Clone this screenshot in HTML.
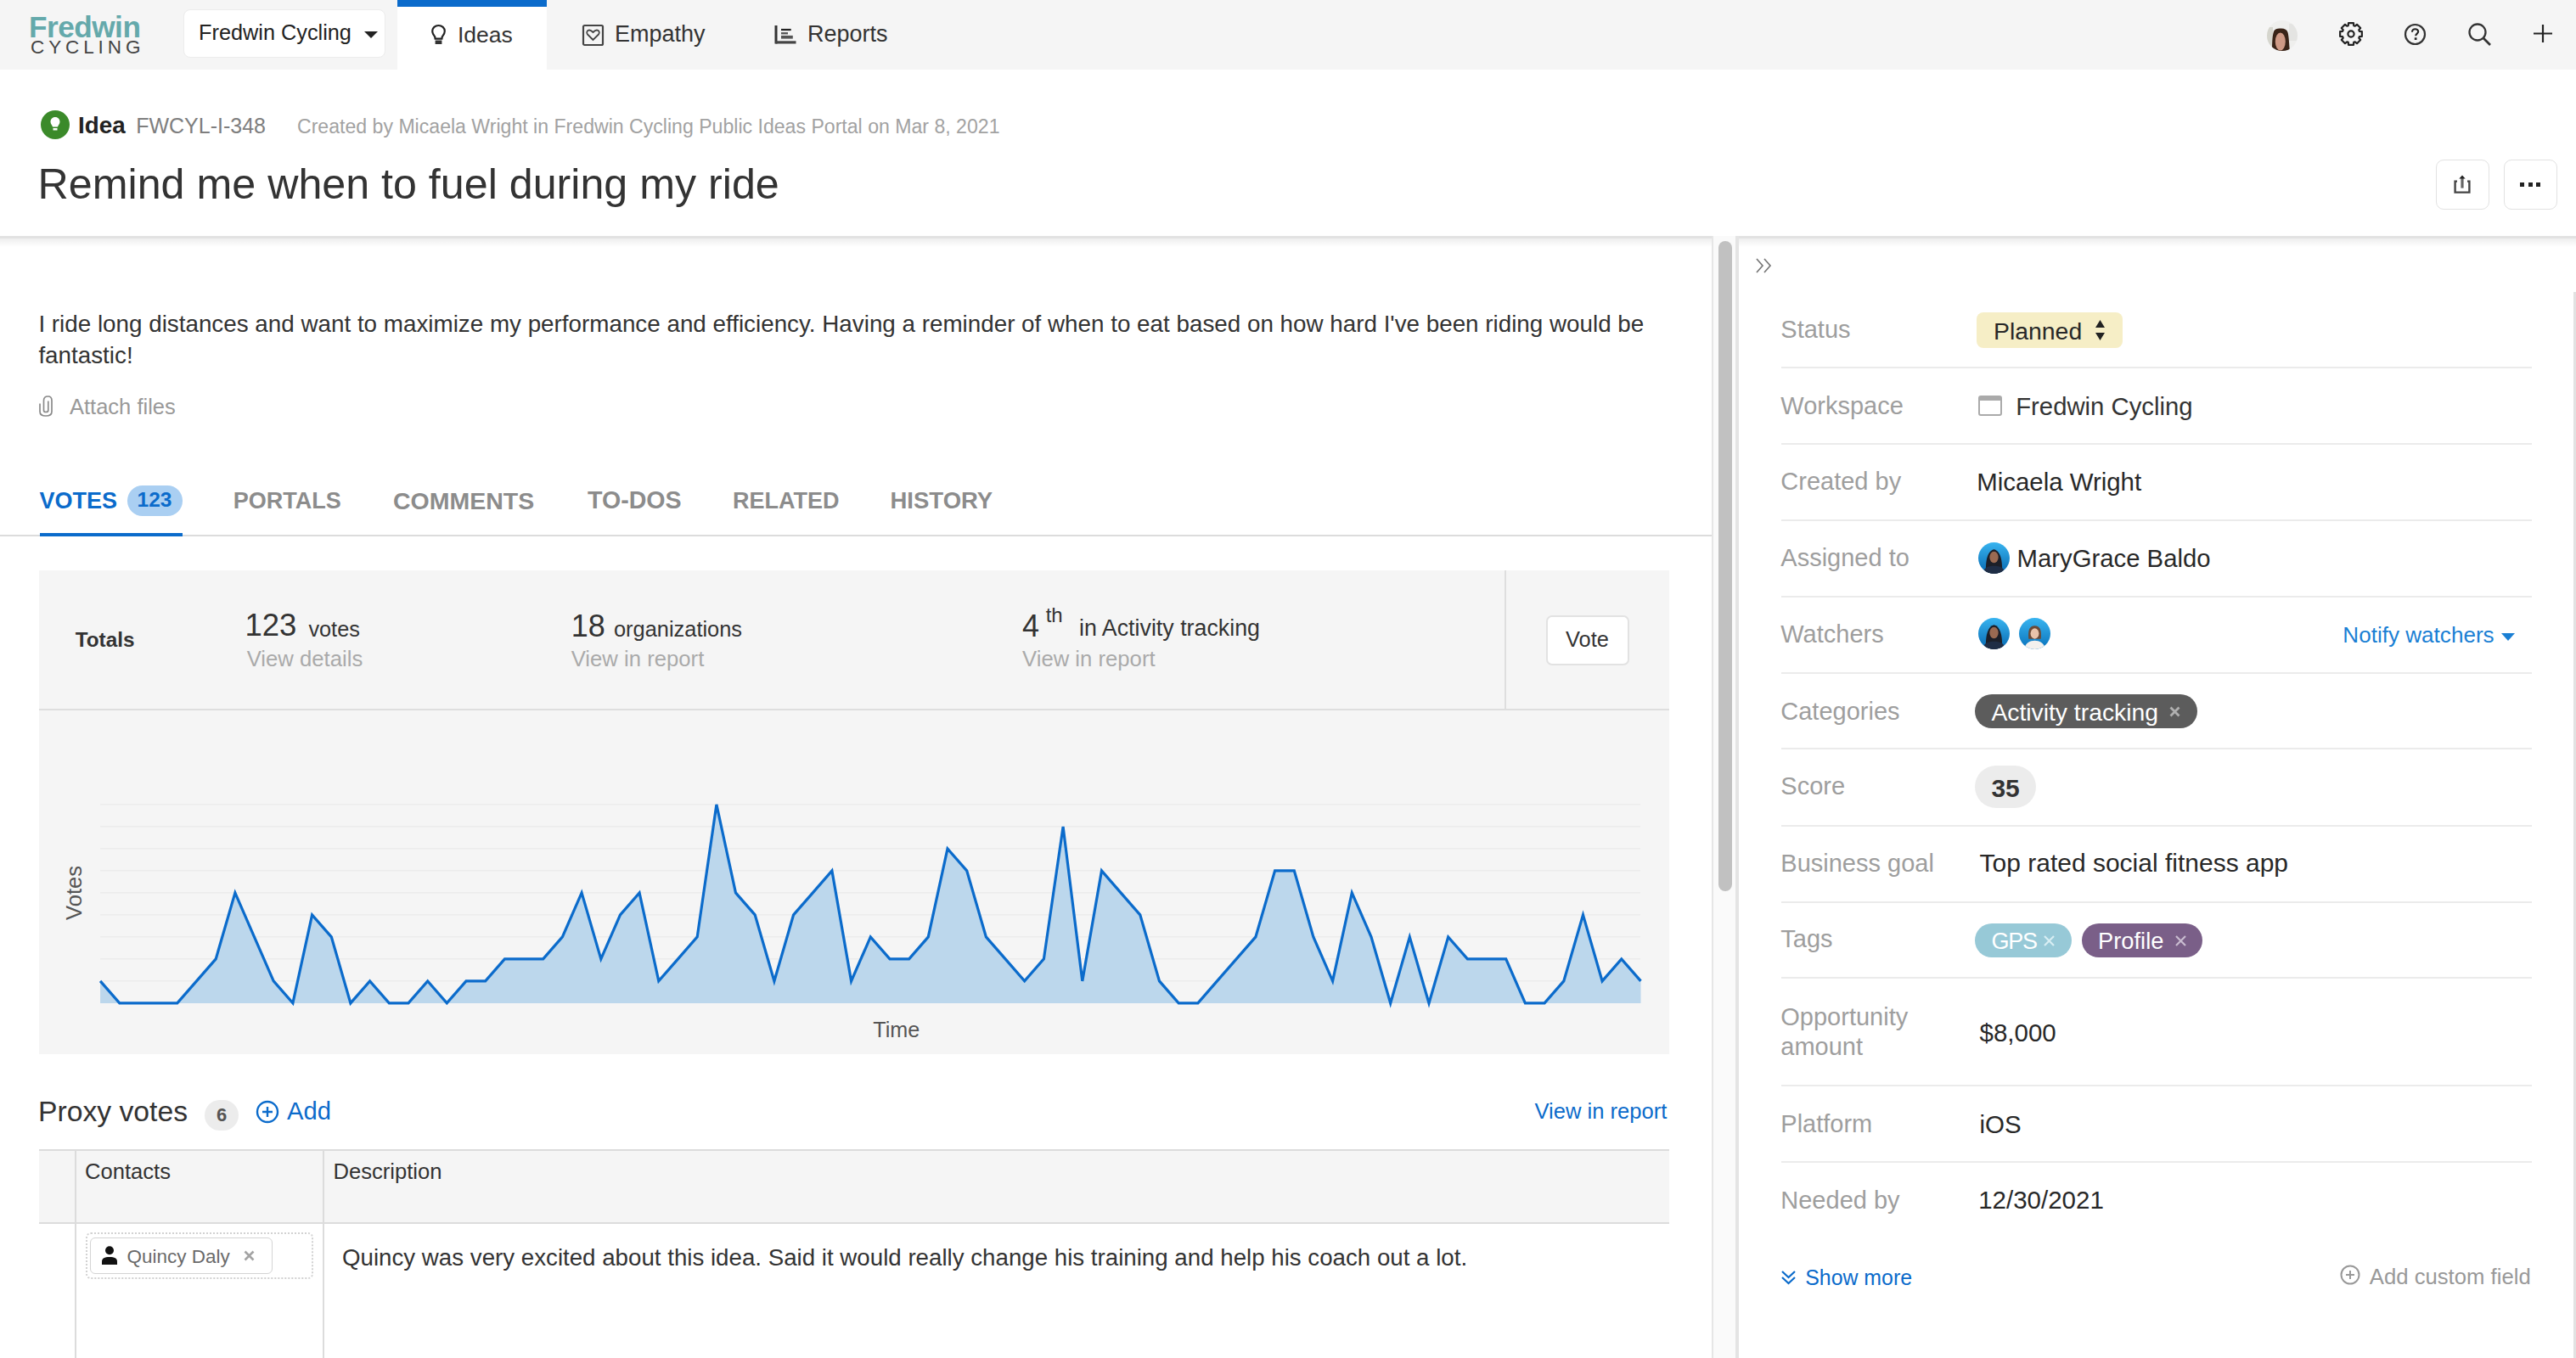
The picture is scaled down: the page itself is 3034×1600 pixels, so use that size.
<!DOCTYPE html>
<html><head><meta charset="utf-8"><title>Remind me when to fuel during my ride</title>
<style>
html,body{margin:0;padding:0;width:3034px;height:1600px;overflow:hidden;background:#fff;}
body{position:relative;font-family:"Liberation Sans",sans-serif;}
.a{position:absolute;}
.t{position:absolute;white-space:nowrap;line-height:1;}
</style></head><body>
<div class="a" style="left:0.0px;top:0.0px;width:3034.0px;height:82.0px;background:#f5f5f5"></div>
<div class="t" style="left:34.0px;top:14.0px;font-size:35.2px;color:#64a9ab;font-weight:700;letter-spacing:-0.5px">Fredwin</div>
<div class="t" style="left:36.0px;top:45.0px;font-size:22.5px;color:#444;font-weight:400;letter-spacing:4.9px">CYCLING</div>
<div class="a" style="left:216.0px;top:11.0px;width:238.0px;height:57.0px;background:#fff;border-radius:8px;border:1.5px solid #ececec;box-sizing:border-box"></div>
<div class="t" style="left:234.0px;top:26.3px;font-size:25.3px;color:#222;font-weight:400;">Fredwin Cycling</div>
<svg class="a" style="left:428px;top:36px" width="18" height="10"><path d="M1 1 L17 1 L9 9 Z" fill="#222"/></svg>
<div class="a" style="left:468.0px;top:0.0px;width:176.0px;height:82.0px;background:#fff"></div>
<div class="a" style="left:468.0px;top:0.0px;width:176.0px;height:8.0px;background:#0b6bcb"></div>
<div class="t" style="left:539.0px;top:27.6px;font-size:26.5px;color:#333;font-weight:400;">Ideas</div>
<div class="t" style="left:724.0px;top:27.1px;font-size:27px;color:#333;font-weight:400;">Empathy</div>
<div class="t" style="left:951.0px;top:27.1px;font-size:27px;color:#333;font-weight:400;">Reports</div>
<svg class="a" style="left:507px;top:28px" width="19" height="26" viewBox="0 0 19 26"><path d="M9.5 2 C5.5 2 2.2 4.8 2.2 8.8 C2.2 11.8 4.2 13.6 5.2 15.2 L5.6 17.6 H13.4 L13.8 15.2 C14.8 13.6 16.8 11.8 16.8 8.8 C16.8 4.8 13.5 2 9.5 2 Z" fill="none" stroke="#222" stroke-width="2.2"/><rect x="5.6" y="19.5" width="7.8" height="4.5" fill="#333"/></svg>
<svg class="a" style="left:685px;top:28px" width="27" height="27" viewBox="0 0 27 27"><rect x="2" y="2" width="23" height="23" rx="1.5" fill="none" stroke="#444" stroke-width="2.2"/><path d="M13.5 19 L7 12.5 C5.5 11 6 7.5 9 7.5 C11 7.5 12.5 9 13.5 10 C14.5 9 16 7.5 18 7.5 C21 7.5 21.5 11 20 12.5 Z" fill="none" stroke="#444" stroke-width="1.8"/></svg>
<svg class="a" style="left:911px;top:29px" width="28" height="24" viewBox="0 0 28 24"><rect x="1.5" y="1" width="3" height="21.5" fill="#333"/><rect x="2.5" y="19.3" width="24" height="3.2" fill="#444"/><rect x="9" y="4.9" width="11.7" height="2.2" fill="#222"/><rect x="9" y="9.1" width="8" height="2.3" fill="#555"/><rect x="9" y="12.9" width="13.8" height="3.7" fill="#555"/></svg>
<svg class="a" style="left:2670px;top:23.5px" width="36" height="36" viewBox="0 0 36 36"><defs><clipPath id="cav"><circle cx="18" cy="18" r="18"/></clipPath></defs><g clip-path="url(#cav)"><rect width="36" height="36" fill="#efefed"/><rect x="0" y="8" width="7" height="28" fill="#d6d6ce"/><rect x="26" y="4" width="10" height="20" fill="#e4e4e2"/><path d="M6 36 C6 26 6.5 14 9 11.5 C11 9.5 14 9.5 17 9.5 C21 9.5 23.5 11 24.5 14 C26 19 26 28 27 36 Z" fill="#3a2418"/><ellipse cx="15.8" cy="25" rx="6" ry="10.5" fill="#cf9a86"/></g></svg>
<svg class="a" style="left:2754px;top:25px" width="30" height="30" viewBox="0 0 30 30"><path d="M18.21 24.89 L17.97 27.86 L12.03 27.86 L11.79 24.89 L10.28 24.27 L8.01 26.19 L3.81 21.99 L5.73 19.72 L5.11 18.21 L2.14 17.97 L2.14 12.03 L5.11 11.79 L5.73 10.28 L3.81 8.01 L8.01 3.81 L10.28 5.73 L11.79 5.11 L12.03 2.14 L17.97 2.14 L18.21 5.11 L19.72 5.73 L21.99 3.81 L26.19 8.01 L24.27 10.28 L24.89 11.79 L27.86 12.03 L27.86 17.97 L24.89 18.21 L24.27 19.72 L26.19 21.99 L21.99 26.19 L19.72 24.27 Z" fill="none" stroke="#222" stroke-width="2.2" stroke-linejoin="round"/><circle cx="15" cy="15" r="3.6" fill="none" stroke="#222" stroke-width="2.2"/></svg>
<svg class="a" style="left:2831px;top:27px" width="27" height="27" viewBox="0 0 27 27"><circle cx="13.5" cy="13.5" r="11.5" fill="none" stroke="#333" stroke-width="2.2"/><path d="M10 10.8 C10 8.3 11.7 7.3 13.6 7.3 C15.5 7.3 17.2 8.5 17.2 10.3 C17.2 12.4 14.2 12.9 14.2 15.2" fill="none" stroke="#222" stroke-width="2.1"/><rect x="12.8" y="17.3" width="2.7" height="2.7" fill="#222"/></svg>
<svg class="a" style="left:2906px;top:26px" width="30" height="30" viewBox="0 0 30 30"><circle cx="12" cy="12" r="9.5" fill="none" stroke="#333" stroke-width="2.3"/><path d="M19 19 L27 27" stroke="#333" stroke-width="2.6"/></svg>
<svg class="a" style="left:2983px;top:28px" width="24" height="23" viewBox="0 0 24 23"><path d="M12 1 V22 M1 11.5 H23" stroke="#222" stroke-width="2.2"/></svg>
<div class="a" style="left:48px;top:130px;width:34px;height:34px;border-radius:50%;background:#3b8a2a"></div>
<svg class="a" style="left:55px;top:136px" width="20" height="22" viewBox="0 0 20 22"><path d="M10 2 C6.5 2 4.5 4.5 4.5 7.5 C4.5 10 6.5 11.5 7 13.5 L13 13.5 C13.5 11.5 15.5 10 15.5 7.5 C15.5 4.5 13.5 2 10 2 Z" fill="#fff"/><rect x="7.5" y="15" width="5" height="2.5" fill="#fff"/></svg>
<div class="t" style="left:92.0px;top:134.1px;font-size:27.8px;color:#222;font-weight:700;">Idea</div>
<div class="t" style="left:160.2px;top:136.4px;font-size:25px;color:#7e7e7e;font-weight:400;">FWCYL-I-348</div>
<div class="t" style="left:350.0px;top:138.0px;font-size:23.1px;color:#a2a2a2;font-weight:400;">Created by Micaela Wright in Fredwin Cycling Public Ideas Portal on Mar 8, 2021</div>
<div class="t" style="left:44.6px;top:191.5px;font-size:50.2px;color:#333;font-weight:400;">Remind me when to fuel during my ride</div>
<div class="a" style="left:2869.0px;top:188.0px;width:63.0px;height:59.0px;border:1.6px solid #e2e2e2;border-radius:9px;box-sizing:border-box;background:#fff"></div>
<div class="a" style="left:2949.0px;top:188.0px;width:63.0px;height:59.0px;border:1.6px solid #e2e2e2;border-radius:9px;box-sizing:border-box;background:#fff"></div>
<svg class="a" style="left:2889px;top:205px" width="22" height="25" viewBox="0 0 22 25"><path d="M5 8.6 H2.6 V21.6 H19.4 V8.6 H17" fill="none" stroke="#444" stroke-width="2.4"/><path d="M11 4 V16.6" stroke="#666" stroke-width="3.2"/><path d="M7.3 5.6 L11 1.4 L14.7 5.6 Z" fill="#222"/></svg>
<svg class="a" style="left:2966px;top:212px" width="30" height="10" viewBox="0 0 30 10"><rect x="2" y="3" width="5" height="5" fill="#222"/><rect x="12" y="3" width="5" height="5" fill="#222"/><rect x="21" y="3" width="5" height="5" fill="#222"/></svg>
<div class="a" style="left:0.0px;top:278.0px;width:3034.0px;height:3.0px;background:#e2e2e2"></div>
<div class="a" style="left:0.0px;top:281.0px;width:3034.0px;height:10.0px;background:linear-gradient(#eeeeee,#ffffff)"></div>
<div class="t" style="left:45.4px;top:367.5px;font-size:27.8px;color:#333;font-weight:400;">I ride long distances and want to maximize my performance and efficiency. Having a reminder of when to eat based on how hard I've been riding would be</div>
<div class="t" style="left:45.4px;top:404.5px;font-size:27.8px;color:#333;font-weight:400;">fantastic!</div>
<svg class="a" style="left:45px;top:465px" width="18" height="27" viewBox="0 0 18 27"><path d="M2 10.5 V20 C2 23.5 4.5 25 9 25 C13.5 25 16 23.5 16 20 V7 C16 3.5 14.5 2 11.5 2 C8.5 2 6.5 3.5 6.5 7 V18.5 C6.5 20 7.5 20.5 9 20.5 C10.5 20.5 11.8 20 11.8 18.5 V7.5" fill="none" stroke="#8a8a8a" stroke-width="1.7"/></svg>
<div class="t" style="left:82.0px;top:466.8px;font-size:25.5px;color:#999;font-weight:400;">Attach files</div>
<div class="t" style="left:46.6px;top:576.7px;font-size:27px;color:#0b6bcb;font-weight:700;">VOTES</div>
<div class="a" style="left:150.4px;top:572.2px;width:65.0px;height:35.5px;background:#aacff2;border-radius:17.75px"></div>
<div class="t" style="left:161.5px;top:577.3px;font-size:24.5px;color:#0b6bcb;font-weight:700;">123</div>
<div class="t" style="left:274.7px;top:576.7px;font-size:27px;color:#8c8c8c;font-weight:700;">PORTALS</div>
<div class="t" style="left:463.0px;top:575.5px;font-size:28.5px;color:#8c8c8c;font-weight:700;">COMMENTS</div>
<div class="t" style="left:692.0px;top:575.4px;font-size:28.6px;color:#8c8c8c;font-weight:700;">TO-DOS</div>
<div class="t" style="left:863.0px;top:576.7px;font-size:27px;color:#8c8c8c;font-weight:700;">RELATED</div>
<div class="t" style="left:1048.5px;top:576.3px;font-size:27.5px;color:#8c8c8c;font-weight:700;">HISTORY</div>
<div class="a" style="left:0.0px;top:630.0px;width:2016.0px;height:2.0px;background:#dcdcdc"></div>
<div class="a" style="left:46.6px;top:628.0px;width:168.4px;height:4.0px;background:#0b6bcb"></div>
<div class="a" style="left:46.0px;top:672.0px;width:1920.0px;height:570.0px;background:#f5f5f5"></div>
<div class="a" style="left:46.0px;top:835.0px;width:1920.0px;height:2.0px;background:#dedede"></div>
<div class="a" style="left:1772.0px;top:672.0px;width:2.0px;height:164.0px;background:#dedede"></div>
<div class="t" style="left:88.7px;top:741.6px;font-size:24.3px;color:#333;font-weight:700;">Totals</div>
<div class="t" style="left:288.4px;top:719.1px;font-size:36.5px;color:#333;font-weight:400;">123</div>
<div class="t" style="left:363.4px;top:728.6px;font-size:25.3px;color:#333;font-weight:400;">votes</div>
<div class="t" style="left:290.7px;top:763.6px;font-size:25.7px;color:#aaa;font-weight:400;">View details</div>
<div class="t" style="left:672.7px;top:719.5px;font-size:36px;color:#333;font-weight:400;">18</div>
<div class="t" style="left:723.0px;top:728.5px;font-size:25.4px;color:#333;font-weight:400;">organizations</div>
<div class="t" style="left:672.7px;top:763.6px;font-size:25.7px;color:#aaa;font-weight:400;">View in report</div>
<div class="t" style="left:1204.0px;top:719.5px;font-size:36px;color:#333;font-weight:400;">4</div>
<div class="t" style="left:1231.7px;top:713.2px;font-size:24px;color:#333;font-weight:400;">th</div>
<div class="t" style="left:1271.0px;top:727.3px;font-size:26.8px;color:#333;font-weight:400;">in Activity tracking</div>
<div class="t" style="left:1204.0px;top:763.6px;font-size:25.7px;color:#aaa;font-weight:400;">View in report</div>
<div class="a" style="left:1821.0px;top:724.5px;width:98.0px;height:59.0px;background:#fff;border:2px solid #e2e2e2;border-radius:7px;box-sizing:border-box"></div>
<div class="t" style="left:1844.0px;top:740.8px;font-size:25.4px;color:#333;font-weight:400;">Vote</div>
<svg class="a" style="left:0;top:0" width="2016" height="1600"><line x1="118" y1="947.8" x2="1932" y2="947.8" stroke="#ececec" stroke-width="1.5"/><line x1="118" y1="973.8" x2="1932" y2="973.8" stroke="#ececec" stroke-width="1.5"/><line x1="118" y1="999.8" x2="1932" y2="999.8" stroke="#ececec" stroke-width="1.5"/><line x1="118" y1="1025.8" x2="1932" y2="1025.8" stroke="#ececec" stroke-width="1.5"/><line x1="118" y1="1051.8" x2="1932" y2="1051.8" stroke="#ececec" stroke-width="1.5"/><line x1="118" y1="1077.8" x2="1932" y2="1077.8" stroke="#ececec" stroke-width="1.5"/><line x1="118" y1="1103.8" x2="1932" y2="1103.8" stroke="#ececec" stroke-width="1.5"/><line x1="118" y1="1129.8" x2="1932" y2="1129.8" stroke="#ececec" stroke-width="1.5"/><line x1="118" y1="1155.8" x2="1932" y2="1155.8" stroke="#ececec" stroke-width="1.5"/><path d="M118.1,1155.9 L140.8,1181.9 L163.5,1181.9 L186.1,1181.9 L208.8,1181.9 L231.5,1155.9 L254.2,1129.9 L276.9,1051.9 L299.5,1103.9 L322.2,1155.9 L344.9,1181.9 L367.6,1077.9 L390.3,1103.9 L412.9,1181.9 L435.6,1155.9 L458.3,1181.9 L481.0,1181.9 L503.7,1155.9 L526.3,1181.9 L549.0,1155.9 L571.7,1155.9 L594.4,1129.9 L617.1,1129.9 L639.7,1129.9 L662.4,1103.9 L685.1,1051.9 L707.8,1129.9 L730.5,1077.9 L753.1,1051.9 L775.8,1155.9 L798.5,1129.9 L821.2,1103.9 L843.9,947.9 L866.5,1051.9 L889.2,1077.9 L911.9,1155.9 L934.6,1077.9 L957.3,1051.9 L979.9,1025.9 L1002.6,1155.9 L1025.3,1103.9 L1048.0,1129.9 L1070.7,1129.9 L1093.3,1103.9 L1116.0,999.9 L1138.7,1025.9 L1161.4,1103.9 L1184.1,1129.9 L1206.7,1155.9 L1229.4,1129.9 L1252.1,973.9 L1274.8,1155.9 L1297.5,1025.9 L1320.1,1051.9 L1342.8,1077.9 L1365.5,1155.9 L1388.2,1181.9 L1410.9,1181.9 L1433.5,1155.9 L1456.2,1129.9 L1478.9,1103.9 L1501.6,1025.9 L1524.3,1025.9 L1546.9,1103.9 L1569.6,1155.9 L1592.3,1051.9 L1615.0,1103.9 L1637.7,1181.9 L1660.3,1103.9 L1683.0,1181.9 L1705.7,1103.9 L1728.4,1129.9 L1751.1,1129.9 L1773.7,1129.9 L1796.4,1181.9 L1819.1,1181.9 L1841.8,1155.9 L1864.5,1077.9 L1887.1,1155.9 L1909.8,1129.9 L1932.5,1155.9 L1932.5,1181.9 L118.1,1181.9 Z" fill="#bcd7ec"/><path d="M118.1,1155.9 L140.8,1181.9 L163.5,1181.9 L186.1,1181.9 L208.8,1181.9 L231.5,1155.9 L254.2,1129.9 L276.9,1051.9 L299.5,1103.9 L322.2,1155.9 L344.9,1181.9 L367.6,1077.9 L390.3,1103.9 L412.9,1181.9 L435.6,1155.9 L458.3,1181.9 L481.0,1181.9 L503.7,1155.9 L526.3,1181.9 L549.0,1155.9 L571.7,1155.9 L594.4,1129.9 L617.1,1129.9 L639.7,1129.9 L662.4,1103.9 L685.1,1051.9 L707.8,1129.9 L730.5,1077.9 L753.1,1051.9 L775.8,1155.9 L798.5,1129.9 L821.2,1103.9 L843.9,947.9 L866.5,1051.9 L889.2,1077.9 L911.9,1155.9 L934.6,1077.9 L957.3,1051.9 L979.9,1025.9 L1002.6,1155.9 L1025.3,1103.9 L1048.0,1129.9 L1070.7,1129.9 L1093.3,1103.9 L1116.0,999.9 L1138.7,1025.9 L1161.4,1103.9 L1184.1,1129.9 L1206.7,1155.9 L1229.4,1129.9 L1252.1,973.9 L1274.8,1155.9 L1297.5,1025.9 L1320.1,1051.9 L1342.8,1077.9 L1365.5,1155.9 L1388.2,1181.9 L1410.9,1181.9 L1433.5,1155.9 L1456.2,1129.9 L1478.9,1103.9 L1501.6,1025.9 L1524.3,1025.9 L1546.9,1103.9 L1569.6,1155.9 L1592.3,1051.9 L1615.0,1103.9 L1637.7,1181.9 L1660.3,1103.9 L1683.0,1181.9 L1705.7,1103.9 L1728.4,1129.9 L1751.1,1129.9 L1773.7,1129.9 L1796.4,1181.9 L1819.1,1181.9 L1841.8,1155.9 L1864.5,1077.9 L1887.1,1155.9 L1909.8,1129.9 L1932.5,1155.9" fill="none" stroke="#0b6bcb" stroke-width="3.2" stroke-linejoin="miter"/></svg>
<div class="t" style="left:55px;top:1039px;width:64px;font-size:25.6px;color:#555;transform:rotate(-90deg);transform-origin:50% 50%;text-align:center;line-height:26px">Votes</div>
<div class="t" style="left:1028.3px;top:1200.7px;font-size:25.2px;color:#555;font-weight:400;">Time</div>
<div class="t" style="left:45.0px;top:1292.8px;font-size:33.7px;color:#333;font-weight:400;">Proxy votes</div>
<div class="a" style="left:241.0px;top:1296.0px;width:40.0px;height:36.0px;background:#ececec;border-radius:18px"></div>
<div class="t" style="left:255.0px;top:1303.4px;font-size:22px;color:#555;font-weight:700;">6</div>
<svg class="a" style="left:300px;top:1295px" width="30" height="30" viewBox="0 0 30 30"><circle cx="15" cy="15" r="12" fill="none" stroke="#0b6bcb" stroke-width="2.4"/><path d="M15 9 V21 M9 15 H21" stroke="#0b6bcb" stroke-width="2.4"/></svg>
<div class="t" style="left:338.0px;top:1295.3px;font-size:29.2px;color:#0b6bcb;font-weight:400;">Add</div>
<div class="t" style="left:1807.4px;top:1296.7px;font-size:25.6px;color:#0b6bcb;font-weight:400;">View in report</div>
<div class="a" style="left:46.0px;top:1354.0px;width:1920.0px;height:2.0px;background:#dcdcdc"></div>
<div class="a" style="left:46.0px;top:1356.0px;width:1920.0px;height:85.0px;background:#f5f5f5"></div>
<div class="a" style="left:46.0px;top:1440.0px;width:1920.0px;height:2.0px;background:#dcdcdc"></div>
<div class="a" style="left:88.0px;top:1356.0px;width:2.0px;height:244.0px;background:#dcdcdc"></div>
<div class="a" style="left:380.0px;top:1356.0px;width:2.0px;height:244.0px;background:#dcdcdc"></div>
<div class="t" style="left:100.0px;top:1367.8px;font-size:25.6px;color:#333;font-weight:400;">Contacts</div>
<div class="t" style="left:392.5px;top:1367.8px;font-size:25.6px;color:#333;font-weight:400;">Description</div>
<div class="a" style="left:100.5px;top:1452.0px;width:268.0px;height:55.0px;border:2px dotted #d2d2d2;border-radius:6px;box-sizing:border-box"></div>
<div class="a" style="left:106.0px;top:1458.0px;width:215.0px;height:43.0px;border:1.6px solid #d4d4d4;border-radius:6px;box-sizing:border-box;background:#fff"></div>
<svg class="a" style="left:118px;top:1467px" width="22" height="26" viewBox="0 0 22 26"><circle cx="11" cy="6.3" r="5" fill="#111"/><path d="M2 23 V19.5 C2 15.5 5 14 11 14 C17 14 20 15.5 20 19.5 V23 Z" fill="#111"/></svg>
<div class="t" style="left:149.5px;top:1469.5px;font-size:22.5px;color:#6a6a6a;font-weight:400;">Quincy Daly</div>
<svg class="a" style="left:286px;top:1472px" width="15" height="15" viewBox="0 0 15 15"><path d="M2.5 2.5 L12.5 12.5 M12.5 2.5 L2.5 12.5" stroke="#a3a3a3" stroke-width="2.6"/></svg>
<div class="t" style="left:403.0px;top:1468.1px;font-size:27.7px;color:#333;font-weight:400;">Quincy was very excited about this idea. Said it would really change his training and help his coach out a lot.</div>
<div class="a" style="left:2016.0px;top:278.0px;width:32.0px;height:1322.0px;background:#fafafa;border-left:2px solid #e6e6e6;border-right:4px solid #e4e4e4;box-sizing:border-box"></div>
<div class="a" style="left:2024.0px;top:284.0px;width:16.0px;height:766.0px;background:#c1c1c1;border-radius:8px"></div>
<svg class="a" style="left:2067px;top:303px" width="21" height="20" viewBox="0 0 21 20"><path d="M2 2 L9 10 L2 18 M11 2 L18 10 L11 18" fill="none" stroke="#777" stroke-width="1.7"/></svg>
<div class="a" style="left:3031.0px;top:344.0px;width:3.0px;height:1256.0px;background:#e2e2e2"></div>
<div class="a" style="left:2098.0px;top:431.7px;width:884.0px;height:2.0px;background:#ebebeb"></div>
<div class="a" style="left:2098.0px;top:521.6px;width:884.0px;height:2.0px;background:#ebebeb"></div>
<div class="a" style="left:2098.0px;top:611.8px;width:884.0px;height:2.0px;background:#ebebeb"></div>
<div class="a" style="left:2098.0px;top:701.6px;width:884.0px;height:2.0px;background:#ebebeb"></div>
<div class="a" style="left:2098.0px;top:791.6px;width:884.0px;height:2.0px;background:#ebebeb"></div>
<div class="a" style="left:2098.0px;top:881.2px;width:884.0px;height:2.0px;background:#ebebeb"></div>
<div class="a" style="left:2098.0px;top:971.6px;width:884.0px;height:2.0px;background:#ebebeb"></div>
<div class="a" style="left:2098.0px;top:1061.6px;width:884.0px;height:2.0px;background:#ebebeb"></div>
<div class="a" style="left:2098.0px;top:1151.2px;width:884.0px;height:2.0px;background:#ebebeb"></div>
<div class="a" style="left:2098.0px;top:1277.5px;width:884.0px;height:2.0px;background:#ebebeb"></div>
<div class="a" style="left:2098.0px;top:1367.5px;width:884.0px;height:2.0px;background:#ebebeb"></div>
<div class="t" style="left:2097.3px;top:373.9px;font-size:29px;color:#9e9e9e;font-weight:400;">Status</div>
<div class="a" style="left:2328.0px;top:368.0px;width:172.0px;height:42.0px;background:#f6eec6;border-radius:8px"></div>
<div class="t" style="left:2348.0px;top:376.4px;font-size:28.4px;color:#282828;font-weight:400;">Planned</div>
<svg class="a" style="left:2466px;top:375px" width="15" height="29" viewBox="0 0 15 29"><path d="M7.5 2 L13 11 H2 Z M2 17 H13 L7.5 26 Z" fill="#222"/></svg>
<div class="t" style="left:2097.3px;top:463.8px;font-size:29px;color:#9e9e9e;font-weight:400;">Workspace</div>
<svg class="a" style="left:2330px;top:466px" width="28" height="24" viewBox="0 0 28 24"><rect x="1" y="1" width="26" height="22" rx="2" fill="none" stroke="#aaa" stroke-width="2"/><rect x="1" y="1" width="26" height="5" fill="#aaa"/></svg>
<div class="t" style="left:2374.2px;top:463.5px;font-size:29.3px;color:#333;font-weight:400;">Fredwin Cycling</div>
<div class="t" style="left:2097.3px;top:553.3px;font-size:29px;color:#9e9e9e;font-weight:400;">Created by</div>
<div class="t" style="left:2328.3px;top:552.9px;font-size:29.4px;color:#282828;font-weight:400;">Micaela Wright</div>
<div class="t" style="left:2097.3px;top:643.3px;font-size:29px;color:#9e9e9e;font-weight:400;">Assigned to</div>
<svg class="a" style="left:2329.5px;top:639px" width="37" height="37" viewBox="0 0 36 36"><defs><clipPath id="ca1"><circle cx="18" cy="18" r="18"/></clipPath><linearGradient id="ga1" x1="0" y1="0" x2="0" y2="1"><stop offset="0" stop-color="#38b4f0"/><stop offset="1" stop-color="#0768b0"/></linearGradient></defs><g clip-path="url(#ca1)"><rect width="36" height="36" fill="url(#ga1)"/><path d="M9 36 C8 26 9 10 18 8 C27 10 28 26 27 36 Z" fill="#1c1f28"/><ellipse cx="18" cy="17" rx="5" ry="6.5" fill="#9a6a52"/><path d="M5 36 C6 29 11 27 18 27 C25 27 30 29 31 36 Z" fill="#1f2d45"/></g></svg>
<div class="t" style="left:2375.6px;top:643.0px;font-size:29.3px;color:#282828;font-weight:400;">MaryGrace Baldo</div>
<div class="t" style="left:2097.3px;top:732.9px;font-size:29px;color:#9e9e9e;font-weight:400;">Watchers</div>
<svg class="a" style="left:2329.5px;top:728px" width="37" height="37" viewBox="0 0 36 36"><defs><clipPath id="ca2"><circle cx="18" cy="18" r="18"/></clipPath><linearGradient id="ga2" x1="0" y1="0" x2="0" y2="1"><stop offset="0" stop-color="#38b4f0"/><stop offset="1" stop-color="#0768b0"/></linearGradient></defs><g clip-path="url(#ca2)"><rect width="36" height="36" fill="url(#ga2)"/><path d="M9 36 C8 26 9 10 18 8 C27 10 28 26 27 36 Z" fill="#1c1f28"/><ellipse cx="18" cy="17" rx="5" ry="6.5" fill="#9a6a52"/><path d="M5 36 C6 29 11 27 18 27 C25 27 30 29 31 36 Z" fill="#1f2d45"/></g></svg>
<svg class="a" style="left:2377.5px;top:728px" width="37" height="37" viewBox="0 0 36 36"><defs><clipPath id="ca3"><circle cx="18" cy="18" r="18"/></clipPath><linearGradient id="ga3" x1="0" y1="0" x2="0" y2="1"><stop offset="0" stop-color="#38b4f0"/><stop offset="1" stop-color="#0a72bb"/></linearGradient></defs><g clip-path="url(#ca3)"><rect width="36" height="36" fill="url(#ga3)"/><path d="M11 24 C10 14 12 9 18 9 C24 9 26 14 25 24 Z" fill="#6b4a38"/><ellipse cx="18" cy="18" rx="4.8" ry="6" fill="#e8c2aa"/><path d="M6 36 C7 29 12 26 18 26 C24 26 29 29 30 36 Z" fill="#f3f1ee"/></g></svg>
<div class="t" style="left:2759.3px;top:735.3px;font-size:26.1px;color:#1a7fd4;font-weight:400;">Notify watchers</div>
<svg class="a" style="left:2945px;top:745px" width="18" height="11" viewBox="0 0 18 11"><path d="M1 1 H17 L9 10 Z" fill="#1a7fd4"/></svg>
<div class="t" style="left:2097.3px;top:823.7px;font-size:29px;color:#9e9e9e;font-weight:400;">Categories</div>
<div class="a" style="left:2326.0px;top:818.0px;width:262.0px;height:40.0px;background:#5c5c5c;border-radius:20px"></div>
<div class="t" style="left:2345.4px;top:824.5px;font-size:28.3px;color:#fff;font-weight:400;">Activity tracking</div>
<svg class="a" style="left:2554px;top:831px" width="15" height="15" viewBox="0 0 15 15"><path d="M2.5 2.5 L12.5 12.5 M12.5 2.5 L2.5 12.5" stroke="#b0b0b0" stroke-width="2.8"/></svg>
<div class="t" style="left:2097.3px;top:912.2px;font-size:29px;color:#9e9e9e;font-weight:400;">Score</div>
<div class="a" style="left:2326.0px;top:902.0px;width:72.0px;height:50.0px;background:#ececec;border-radius:25px"></div>
<div class="t" style="left:2345.4px;top:913.6px;font-size:30px;color:#333;font-weight:700;">35</div>
<div class="t" style="left:2097.3px;top:1002.9px;font-size:29px;color:#9e9e9e;font-weight:400;">Business goal</div>
<div class="t" style="left:2331.5px;top:1002.0px;font-size:30px;color:#282828;font-weight:400;">Top rated social fitness app</div>
<div class="t" style="left:2097.3px;top:1091.8px;font-size:29px;color:#9e9e9e;font-weight:400;">Tags</div>
<div class="a" style="left:2326.0px;top:1088.0px;width:114.0px;height:40.0px;background:#97c9d7;border-radius:20px"></div>
<div class="t" style="left:2345.4px;top:1095.6px;font-size:27px;color:#fff;font-weight:400;letter-spacing:-1.2px">GPS</div>
<svg class="a" style="left:2406px;top:1101px" width="15" height="15" viewBox="0 0 15 15"><path d="M2 2 L13 13 M13 2 L2 13" stroke="#d8eef3" stroke-width="2.2"/></svg>
<div class="a" style="left:2452.0px;top:1088.0px;width:142.0px;height:40.0px;background:#7a5f88;border-radius:20px"></div>
<div class="t" style="left:2471.0px;top:1095.4px;font-size:27.3px;color:#fff;font-weight:400;">Profile</div>
<svg class="a" style="left:2561px;top:1101px" width="15" height="15" viewBox="0 0 15 15"><path d="M2 2 L13 13 M13 2 L2 13" stroke="#c9bcd0" stroke-width="2.2"/></svg>
<div class="t" style="left:2097.3px;top:1184.1px;font-size:29px;color:#9e9e9e;font-weight:400;">Opportunity</div>
<div class="t" style="left:2097.3px;top:1219.3px;font-size:29px;color:#9e9e9e;font-weight:400;">amount</div>
<div class="t" style="left:2331.5px;top:1201.7px;font-size:29.5px;color:#282828;font-weight:400;">$8,000</div>
<div class="t" style="left:2097.3px;top:1310.0px;font-size:29px;color:#9e9e9e;font-weight:400;">Platform</div>
<div class="t" style="left:2331.5px;top:1309.5px;font-size:29.5px;color:#282828;font-weight:400;">iOS</div>
<div class="t" style="left:2097.3px;top:1399.6px;font-size:29px;color:#9e9e9e;font-weight:400;">Needed by</div>
<div class="t" style="left:2330.2px;top:1399.1px;font-size:29.5px;color:#282828;font-weight:400;">12/30/2021</div>
<svg class="a" style="left:2097px;top:1495px" width="19" height="20" viewBox="0 0 19 20"><path d="M2 3 L9.5 10 L17 3 M2 10 L9.5 17 L17 10" fill="none" stroke="#0b6bcb" stroke-width="2.2"/></svg>
<div class="t" style="left:2126.2px;top:1492.6px;font-size:24.9px;color:#0b6bcb;font-weight:400;">Show more</div>
<svg class="a" style="left:2755px;top:1489px" width="26" height="26" viewBox="0 0 26 26"><circle cx="13" cy="13" r="10.5" fill="none" stroke="#999" stroke-width="2"/><path d="M13 8 V18 M8 13 H18" stroke="#999" stroke-width="2"/></svg>
<div class="t" style="left:2790.8px;top:1491.9px;font-size:25.7px;color:#999;font-weight:400;">Add custom field</div>
</body></html>
